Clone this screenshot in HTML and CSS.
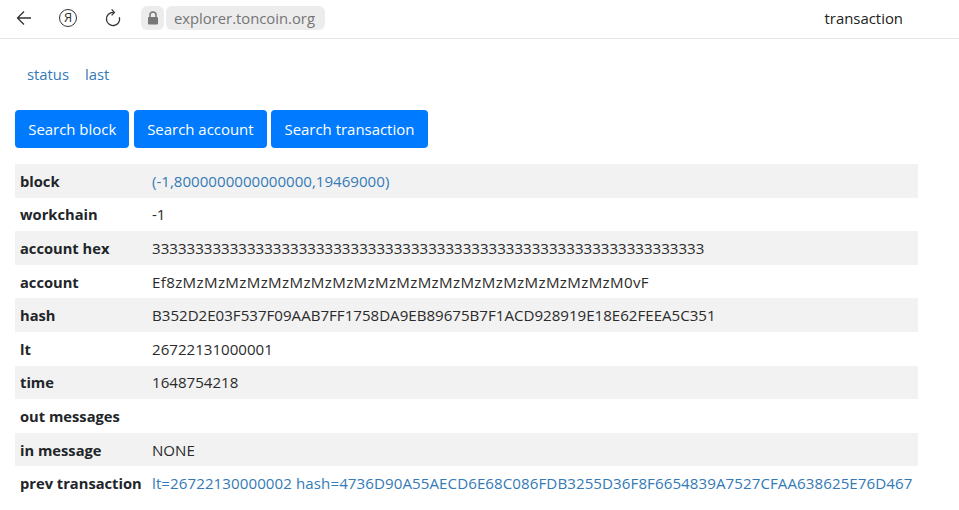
FILE: index.html
```html
<!DOCTYPE html>
<html lang="en">
<head>
<meta charset="utf-8">
<title>transaction</title>
<link rel="stylesheet" href="styles.css">
</head>
<body>
<header class="chrome">
  <svg class="icon back" viewBox="0 0 18 18" width="18" height="18"><path d="M16 9H2.5M9 2.5 2.5 9 9 15.5" fill="none" stroke="#333" stroke-width="1.3"/></svg>
  <span class="ya">Я</span>
  <svg class="icon reload" viewBox="0 0 18 18" width="18" height="18"><path d="M9.5 3.4A6.6 6.6 0 1 0 15.4 8.2" fill="none" stroke="#333" stroke-width="1.3"/><path d="M7.6 .4 10.4 3.4 7.6 6.4" fill="none" stroke="#333" stroke-width="1.3"/></svg>
  <span class="lock"><svg viewBox="0 0 12 14" width="12" height="14"><path d="M3 6V4a3 3 0 0 1 6 0v2" fill="none" stroke="#777" stroke-width="1.5"/><rect x="1" y="6" width="10" height="7.5" rx="1" fill="#777"/></svg></span>
  <span class="url">explorer.toncoin.org</span>
  <span class="title">transaction</span>
</header>
<nav class="links"><a href="#">status</a><a href="#">last</a></nav>
<div class="buttons">
  <button class="btn">Search block</button>
  <button class="btn">Search account</button>
  <button class="btn">Search transaction</button>
</div>
<table class="info">
  <tr><th>block</th><td><a href="#">(-1,8000000000000000,19469000)</a></td></tr>
  <tr><th>workchain</th><td>-1</td></tr>
  <tr><th>account hex</th><td>3333333333333333333333333333333333333333333333333333333333333333</td></tr>
  <tr><th>account</th><td class="addr">Ef8zMzMzMzMzMzMzMzMzMzMzMzMzMzMzMzMzMzMzMzMzM0vF</td></tr>
  <tr><th>hash</th><td>B352D2E03F537F09AAB7FF1758DA9EB89675B7F1ACD928919E18E62FEEA5C351</td></tr>
  <tr><th>lt</th><td>26722131000001</td></tr>
  <tr><th>time</th><td>1648754218</td></tr>
  <tr><th>out messages</th><td></td></tr>
  <tr><th>in message</th><td>NONE</td></tr>
  <tr><th>prev transaction</th><td class="prev"><a href="#">lt=26722130000002 hash=4736D90A55AECD6E68C086FDB3255D36F8F6654839A7527CFAA638625E76D467</a></td></tr>
</table>
</body>
</html>
```
FILE: styles.css
```css
* { box-sizing: border-box; }
html, body { margin: 0; padding: 0; }
body {
  width: 959px;
  height: 510px;
  overflow: hidden;
  background: #fff;
  color: #212529;
  font-family: "Open Sans", "Noto Sans", sans-serif;
  font-size: 14.8px;
}
a { color: #337ab7; text-decoration: none; }
.chrome {
  height: 39px;
  border-bottom: 1px solid #e6e6e6;
  display: flex;
  align-items: center;
  padding: 0 0 2px 15px;
}
.icon { flex: none; }
.ya {
  width: 18px;
  height: 18px;
  margin-left: 26px;
  border: 1.3px solid #333;
  border-radius: 50%;
  font-size: 13px;
  line-height: 15px;
  text-align: center;
  color: #333;
}
.reload { margin-left: 27px; }
.lock {
  margin-left: 19px;
  width: 23px;
  height: 24px;
  background: #ececec;
  border-radius: 6px;
  display: flex;
  align-items: center;
  justify-content: center;
}
.url {
  margin-left: 2px;
  height: 24px;
  width: 159px;
  padding-left: 8px;
  background: #ececec;
  border-radius: 6px;
  color: #757575;
  font-size: 14.8px;
  line-height: 24px;
  white-space: nowrap;
}
.title {
  margin-left: auto;
  margin-right: 56px;
  font-size: 14.9px;
  color: #222;
}
.links {
  display: flex;
  gap: 16px;
  padding: 25px 0 0 27px;
  height: 71px;
}
.buttons { display: flex; gap: 4.5px; padding-left: 15px; }
.btn {
  height: 38px;
  padding: 0 13.2px;
  background: #007bff;
  color: #fff;
  border: 0;
  border-radius: 4px;
  font: inherit;
  font-size: 14.95px;
}
.info {
  margin: 16px 0 0 15px;
  width: 903px;
  border-collapse: collapse;
}
.info tr { height: 33.6px; }
.info tr:nth-child(odd) { background: #f2f2f2; }
.info th, .info td { padding: 0 0 0 5px; text-align: left; white-space: nowrap; }
.info th { font-weight: 700; width: 132px; font-size: 14.7px; color: #212529; }
.info td { font-size: 15.1px; color: #2b2b2b; }
.info td a { color: #337ab7; }
.info .addr { letter-spacing: 0.36px; }
.info .prev { letter-spacing: 0.08px; }
```
